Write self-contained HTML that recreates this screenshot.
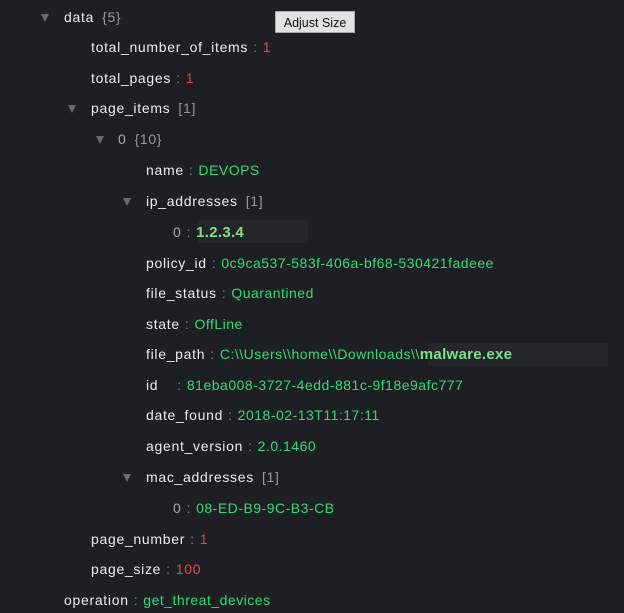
<!DOCTYPE html>
<html><head><meta charset="utf-8"><style>
html,body{margin:0;padding:0;background:#1e1f22;width:624px;height:613px;overflow:hidden;font-family:"Liberation Sans","DejaVu Sans",sans-serif;font-size:14px;}
.r{position:absolute;height:20px;line-height:20px;white-space:nowrap;color:#ececec;letter-spacing:0.7px}
.t{position:absolute;width:0;height:0;border-left:4.5px solid transparent;border-right:4.5px solid transparent;border-top:8px solid #6b6b6b}
.c{color:#9a9a9a;margin-left:8px}
.s{color:#888;margin:0 5px}
.g{color:#2fdc7a;letter-spacing:0.5px}
.n{color:#e5484d}
.b{color:#7ee08a;font-weight:bold;font-size:15px;letter-spacing:0.3px}
.btn{position:absolute;left:275px;top:11px;width:80px;height:22px;background:#e2e2e2;border:1px solid #aaa;color:#111;font-size:12.5px;line-height:22px;text-align:center;box-sizing:border-box}
</style></head><body>
<div class="t" style="left:41px;top:14px"></div>
<div class="r" style="left:64px;top:7px">data<span class="c">{5}</span></div>
<div class="btn">Adjust Size</div>
<div class="r" style="left:91px;top:37px">total_number_of_items<span class="s">:</span><span class="n">1</span></div>
<div class="r" style="left:91px;top:68px">total_pages<span class="s">:</span><span class="n">1</span></div>
<div class="t" style="left:68px;top:105px"></div>
<div class="r" style="left:91px;top:98px">page_items<span class="c">[1]</span></div>
<div class="t" style="left:96px;top:136px"></div>
<div class="r" style="left:118px;top:129px"><span style="color:#aaa">0</span><span class="c">{10}</span></div>
<div class="r" style="left:146px;top:160px">name<span class="s">:</span><span class="g">DEVOPS</span></div>
<div class="t" style="left:123px;top:198px"></div>
<div class="r" style="left:146px;top:191px">ip_addresses<span class="c">[1]</span></div>
<div style="position:absolute;left:198px;top:220px;width:110px;height:23px;background:#25262a"></div>
<div class="r" style="left:173px;top:222px"><span style="color:#aaa">0</span><span class="s">:</span><span class="b">1.2.3.4</span></div>
<div class="r" style="left:146px;top:253px">policy_id<span class="s">:</span><span class="g">0c9ca537-583f-406a-bf68-530421fadeee</span></div>
<div class="r" style="left:146px;top:283px">file_status<span class="s">:</span><span class="g">Quarantined</span></div>
<div class="r" style="left:146px;top:314px">state<span class="s">:</span><span class="g">OffLine</span></div>
<div style="position:absolute;left:428px;top:343px;width:180px;height:23px;background:#25262a"></div>
<div class="r" style="left:146px;top:344px">file_path<span class="s">:</span><span class="g">C:\\Users\\home\\Downloads\\</span><span class="b">malware.exe</span></div>
<div class="r" style="left:146px;top:375px">id<span style="display:inline-block;width:14px"></span><span class="s">:</span><span class="g">81eba008-3727-4edd-881c-9f18e9afc777</span></div>
<div class="r" style="left:146px;top:405px">date_found<span class="s">:</span><span class="g">2018-02-13T11:17:11</span></div>
<div class="r" style="left:146px;top:436px">agent_version<span class="s">:</span><span class="g">2.0.1460</span></div>
<div class="t" style="left:123px;top:474px"></div>
<div class="r" style="left:146px;top:467px">mac_addresses<span class="c">[1]</span></div>
<div class="r" style="left:173px;top:498px"><span style="color:#aaa">0</span><span class="s">:</span><span class="g">08-ED-B9-9C-B3-CB</span></div>
<div class="r" style="left:91px;top:529px">page_number<span class="s">:</span><span class="n">1</span></div>
<div class="r" style="left:91px;top:559px">page_size<span class="s">:</span><span class="n">100</span></div>
<div class="r" style="left:64px;top:590px">operation<span class="s">:</span><span class="g">get_threat_devices</span></div>
</body></html>
